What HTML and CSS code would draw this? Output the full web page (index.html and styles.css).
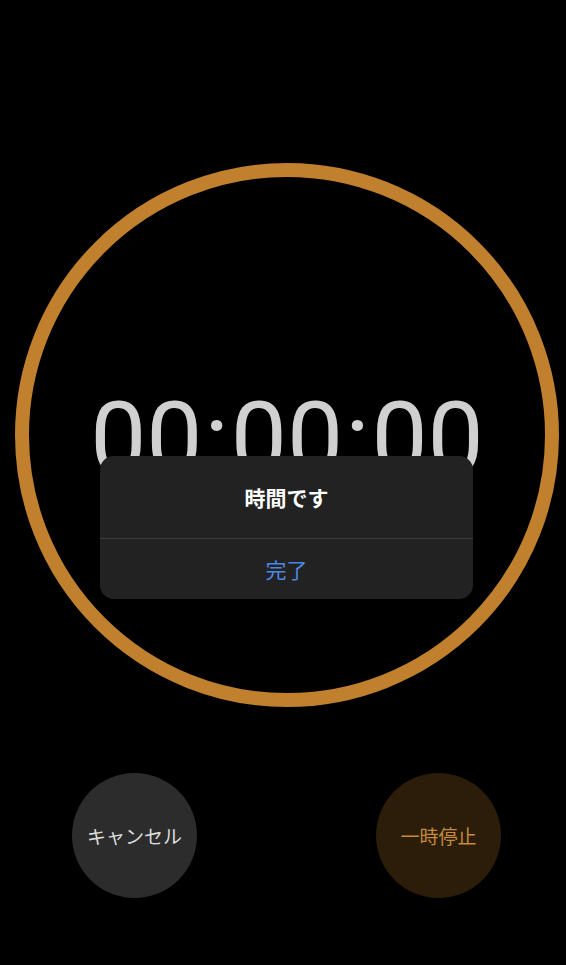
FILE: index.html
```html
<!DOCTYPE html>
<html lang="ja">
<head>
<meta charset="utf-8">
<link rel="stylesheet" href="styles.css">
</head>
<body>
<div class="screen">
  <div class="ring">
    <div class="time">00<span class="colon">:</span>00<span class="colon">:</span>00</div>
  </div>
  <div class="controls">
    <div class="btn cancel">キャンセル</div>
    <div class="btn pause">一時停止</div>
  </div>
  <div class="alert">
    <div class="alert-title">時間です</div>
    <div class="alert-action">完了</div>
  </div>
</div>
</body>
</html>
```

FILE: styles.css
```css
html, body {
  margin: 0;
  padding: 0;
  background: #000;
}
.screen {
  position: relative;
  width: 566px;
  height: 965px;
  background: #000;
  font-family: "Noto Sans CJK JP", "Noto Sans", sans-serif;
  overflow: hidden;
}
.ring {
  box-sizing: border-box;
  width: 544px;
  height: 544px;
  margin: 163px 0 0 15px;
  border: 14px solid #c0802e;
  border-radius: 50%;
  display: flex;
  align-items: center;
  justify-content: center;
}
.time {
  font-family: "Roboto", "Liberation Sans", sans-serif;
  font-weight: 400;
  font-size: 100px;
  line-height: 1;
  color: #d0d0d0;
  margin-top: 8px;
}
.colon {
  padding: 0 2px;
}
.controls {
  display: flex;
  justify-content: space-between;
  padding: 66px 65px 0 72px;
}
.btn {
  width: 125px;
  height: 125px;
  border-radius: 50%;
  display: flex;
  align-items: center;
  justify-content: center;
  font-size: 19px;
}
.cancel {
  background: #2c2c2c;
  color: #dcdcdc;
}
.pause {
  background: #2b1d0a;
  color: #c58a3a;
}
.alert {
  position: absolute;
  top: 456px;
  left: 100px;
  width: 373px;
  height: 143px;
  border-radius: 14px;
  background: #222222;
  display: flex;
  flex-direction: column;
}
.alert-title {
  height: 82px;
  display: flex;
  align-items: center;
  justify-content: center;
  color: #fff;
  font-weight: 700;
  font-size: 21px;
  border-bottom: 1px solid #3c3c3c;
}
.alert-action {
  flex: 1;
  display: flex;
  align-items: center;
  justify-content: center;
  color: #4a88e2;
  font-size: 21px;
}
```
